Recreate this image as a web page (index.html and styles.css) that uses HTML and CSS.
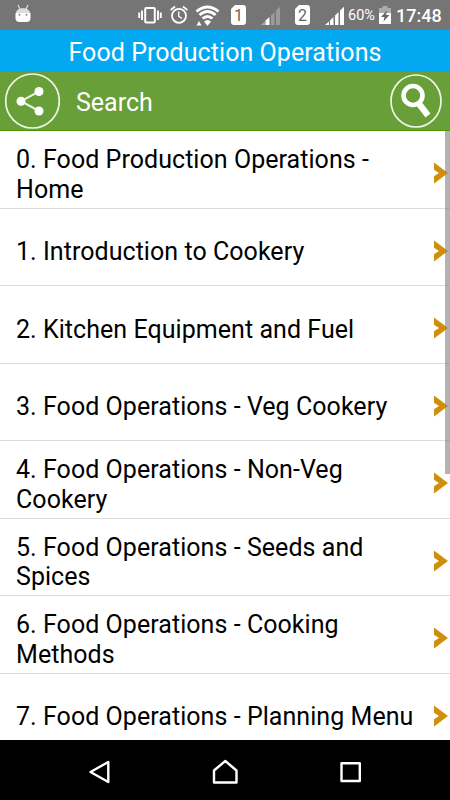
FILE: index.html
```html
<!DOCTYPE html>
<html lang="en">
<head>
    <meta charset="UTF-8">
    <meta name="viewport" content="width=device-width, initial-scale=1.0">
    <title>Food Production Operations</title>
    <link rel="stylesheet" href="styles.css">
</head>
<body>
    <!-- Status Bar -->
    <div class="status-bar">
        <svg class="android" width="16" height="20" viewBox="0 0 16 20">
            <path d="M3 1L5 5M13 1L11 5" stroke="#ddd" stroke-width="1.2"/>
            <path d="M1 9C1 2.500 15 2.500 15 9Z" fill="#ddd"/>
            <path d="M.5 9H15.500V14Q15.500 18 11.500 18H4.500Q.5 18 .5 14Z" fill="#fff"/>
            <circle cx="4.500" cy="10.800" r="1" fill="#888"/><circle cx="11.500" cy="10.800" r="1" fill="#888"/>
        </svg>
        <svg class="vibrate" width="24" height="20" viewBox="0 0 24 20">
            <rect x="7.200" y="3" width="9.600" height="14.500" rx="1" fill="none" stroke="#fff" stroke-width="2"/>
            <path d="M1.200 7.500V13M4 5.500V15M20 5.500V15M22.800 7.500V13" stroke="#fff" stroke-width="1.900"/>
        </svg>
        <svg class="alarm" width="18" height="20" viewBox="0 0 18 20">
            <circle cx="9" cy="10.800" r="7" fill="none" stroke="#fff" stroke-width="1.800"/>
            <path d="M.6 5.200L5 1.500M17.400 5.200L13 1.500" stroke="#fff" stroke-width="1.700"/>
            <path d="M8.700 6.500V11.200L12 13.500" fill="none" stroke="#fff" stroke-width="1.400"/>
        </svg>
        <svg class="wifi" width="25" height="22" viewBox="0 0 25 22">
            <path d="M1.500 6.500Q12.500 -2.500 23.500 6.500M4.500 10Q12.500 3.200 20.500 10M7.600 13.500Q12.500 9.300 17.400 13.500" fill="none" stroke="#fff" stroke-width="2.900"/>
            <path d="M9 16.500Q12.500 13.500 16 16.500L12.500 21Z" fill="#fff"/>
            <path d="M1.500 20.500L4 16L6.500 20.500Z" fill="#fff"/>
        </svg>
        <span class="sim sim-one">1</span>
        <svg class="signal" width="19" height="19" viewBox="0 0 19 19">
            <path d="M0 19L4 15.500V19Z" fill="#aaa"/>
            <path d="M4.500 19V14.500L8.500 11V19Z" fill="#fff"/>
            <path d="M10 19V9.500L13.500 6V19ZM15 19V4.500L19 .8V19Z" fill="#9b9b9b"/>
        </svg>
        <span class="sim sim-two">2</span>
        <svg class="signal" width="19" height="19" viewBox="0 0 19 19">
            <path d="M0 19L4 15.500V19ZM5 19V14.500L8.500 11V19ZM10 19V9.500L13.500 6V19ZM15 19V4.500L19 .8V19Z" fill="#fff"/>
        </svg>
        <span class="percent">60%</span>
        <svg class="battery" width="12" height="18" viewBox="0 0 12 18">
            <path d="M3.500 0H8.500V2H12V7H0V2H3.500Z" fill="#aaa"/>
            <path d="M0 7H12V18H0Z" fill="#fff"/>
            <path d="M8 4.500L2 11H5.500L4.500 15.500L10.500 9H7Z" fill="#666"/>
        </svg>
        <span class="clock">17:48</span>
    </div>

    <h1 class="title">Food Production Operations</h1>

    <!-- Search Section -->
    <div class="search-bar">
        <svg class="share" width="56" height="58" viewBox="0 0 56 58">
            <ellipse cx="28.500" cy="29" rx="26.800" ry="27" fill="none" stroke="#eef6e6" stroke-width="1.700"/>
            <path d="M35 19.500L17 29.200L35 39" fill="none" stroke="#e8f2df" stroke-width="2"/>
            <circle cx="35" cy="19.500" r="4.500" fill="#fff"/>
            <circle cx="17" cy="29.200" r="4.500" fill="#fff"/>
            <circle cx="35" cy="39" r="4.500" fill="#fff"/>
        </svg>
        <span class="search-text">Search</span>
        <svg class="find" width="52" height="54" viewBox="0 0 52 54">
            <ellipse cx="26" cy="27" rx="25" ry="26" fill="none" stroke="#eef6e6" stroke-width="1.700"/>
            <circle cx="23" cy="21.500" r="9.500" fill="none" stroke="#fff" stroke-width="4.600"/>
            <path d="M28 28.500L38 41.500" stroke="#fff" stroke-width="6.200"/>
        </svg>
    </div>

    <!-- Topics -->
    <div class="topics">
        <ul class="topic-list">
            <li class="topic"><span>0. Food Production Operations - Home</span><svg class="arrow" viewBox="0 0 14 22"><path d="M0 .6L14 11L0 21.400V14.200L5 11L0 7.800Z"/></svg></li>
            <li class="topic"><span>1. Introduction to Cookery</span><svg class="arrow" viewBox="0 0 14 22"><path d="M0 .6L14 11L0 21.400V14.200L5 11L0 7.800Z"/></svg></li>
            <li class="topic"><span>2. Kitchen Equipment and Fuel</span><svg class="arrow" viewBox="0 0 14 22"><path d="M0 .6L14 11L0 21.400V14.200L5 11L0 7.800Z"/></svg></li>
            <li class="topic"><span>3. Food Operations - Veg Cookery</span><svg class="arrow" viewBox="0 0 14 22"><path d="M0 .6L14 11L0 21.400V14.200L5 11L0 7.800Z"/></svg></li>
            <li class="topic"><span>4. Food Operations - Non-Veg Cookery</span><svg class="arrow" viewBox="0 0 14 22"><path d="M0 .6L14 11L0 21.400V14.200L5 11L0 7.800Z"/></svg></li>
            <li class="topic"><span>5. Food Operations - Seeds and Spices</span><svg class="arrow" viewBox="0 0 14 22"><path d="M0 .6L14 11L0 21.400V14.200L5 11L0 7.800Z"/></svg></li>
            <li class="topic"><span>6. Food Operations - Cooking Methods</span><svg class="arrow" viewBox="0 0 14 22"><path d="M0 .6L14 11L0 21.400V14.200L5 11L0 7.800Z"/></svg></li>
            <li class="topic"><span>7. Food Operations - Planning Menu</span><svg class="arrow" viewBox="0 0 14 22"><path d="M0 .6L14 11L0 21.400V14.200L5 11L0 7.800Z"/></svg></li>
        </ul>
        <div class="scrollbar"></div>
    </div>

    <!-- Navigation Bar -->
    <div class="nav-bar">
        <svg width="26" height="26" viewBox="0 0 26 26"><path d="M22.300 3V23L4.500 13Z"/></svg>
        <svg width="26" height="26" viewBox="0 0 26 26"><path d="M2 11.500L13.300 2L24.500 11.500V23.500H2Z"/></svg>
        <svg width="26" height="26" viewBox="0 0 26 26"><path d="M4.500 4.200H22.800V22H4.500Z"/></svg>
    </div>
</body>
</html>
```
FILE: styles.css
```css
* {
    box-sizing: border-box;
}
body {
    display: flex;
    flex-direction: column;
    width: 450px;
    height: 800px;
    margin: 0;
    overflow: hidden;
    font-family: Roboto, sans-serif;
    background-color: #fff;
    color: #000;
}
svg {
    display: block;
    flex-shrink: 0;
}
.status-bar {
    display: flex;
    align-items: center;
    height: 30px;
    padding-left: 15px;
    background-color: #757575;
    color: #fff;
    white-space: nowrap;
}
.android {
    margin-bottom: 2px;
}
.vibrate {
    margin-left: 107px;
}
.alarm {
    margin-left: 8px;
}
.wifi {
    margin-left: 7px;
    margin-top: 2px;
}
.sim {
    width: 15px;
    height: 20px;
    border-radius: 3px;
    clip-path: polygon(4px 0, 100% 0, 100% 100%, 0 100%, 0 4px);
    background-color: #fff;
    color: #666;
    font-size: 16px;
    line-height: 21px;
    text-align: center;
}
.sim-one {
    margin-left: 11px;
}
.sim-two {
    margin-left: 15px;
}
.signal {
    margin-left: 15px;
    margin-top: 1px;
}
.percent {
    width: 32px;
    padding-left: 4px;
    font-size: 14.5px;
    line-height: 30px;
    margin-top: 2px;
}
.battery {
    margin-left: 3px;
}
.clock {
    margin-left: 5px;
    margin-top: 1px;
    font-size: 18px;
    font-weight: 500;
}
.title {
    height: 41.5px;
    margin: 0;
    background-color: #03a9f0;
    color: #fff;
    font-size: 25px;
    font-weight: 400;
    letter-spacing: 0.06px;
    line-height: 45px;
    text-align: center;
}
.search-bar {
    display: flex;
    align-items: center;
    height: 59.5px;
    padding: 0 8px 0 4px;
    background-color: #689f38;
    border-bottom: 1px solid #4f9700;
    color: #fff;
}
.search-text {
    margin-left: 16px;
    margin-top: 4px;
    font-size: 25px;
}
.find {
    margin-left: auto;
}
.topics {
    position: relative;
    height: 609px;
    overflow: hidden;
}
.topic-list {
    margin: 0;
    padding: 0;
    list-style-type: none;
}
.topic {
    display: flex;
    align-items: center;
    justify-content: space-between;
    height: 77.5px;
    padding: 8px 2px 0 16px;
    border-bottom: 1px solid #dcdcdc;
    font-size: 25px;
    letter-spacing: 0.05px;
    line-height: 29.3px;
}
.topic span {
    max-width: 405px;
    padding-top: 2.5px;
}
.arrow {
    width: 14px;
    height: 22px;
    fill: #d08f0a;
}
.scrollbar {
    position: absolute;
    top: 0;
    right: 0;
    width: 5px;
    height: 343px;
    background-color: rgba(128, 128, 128, 0.6);
}
.nav-bar {
    display: flex;
    align-items: center;
    justify-content: space-between;
    height: 60px;
    padding: 4px 87px 0 86px;
    background-color: #000;
}
.nav-bar path {
    fill: none;
    stroke: #fff;
    stroke-width: 2.400;
    stroke-linejoin: round;
}
```
